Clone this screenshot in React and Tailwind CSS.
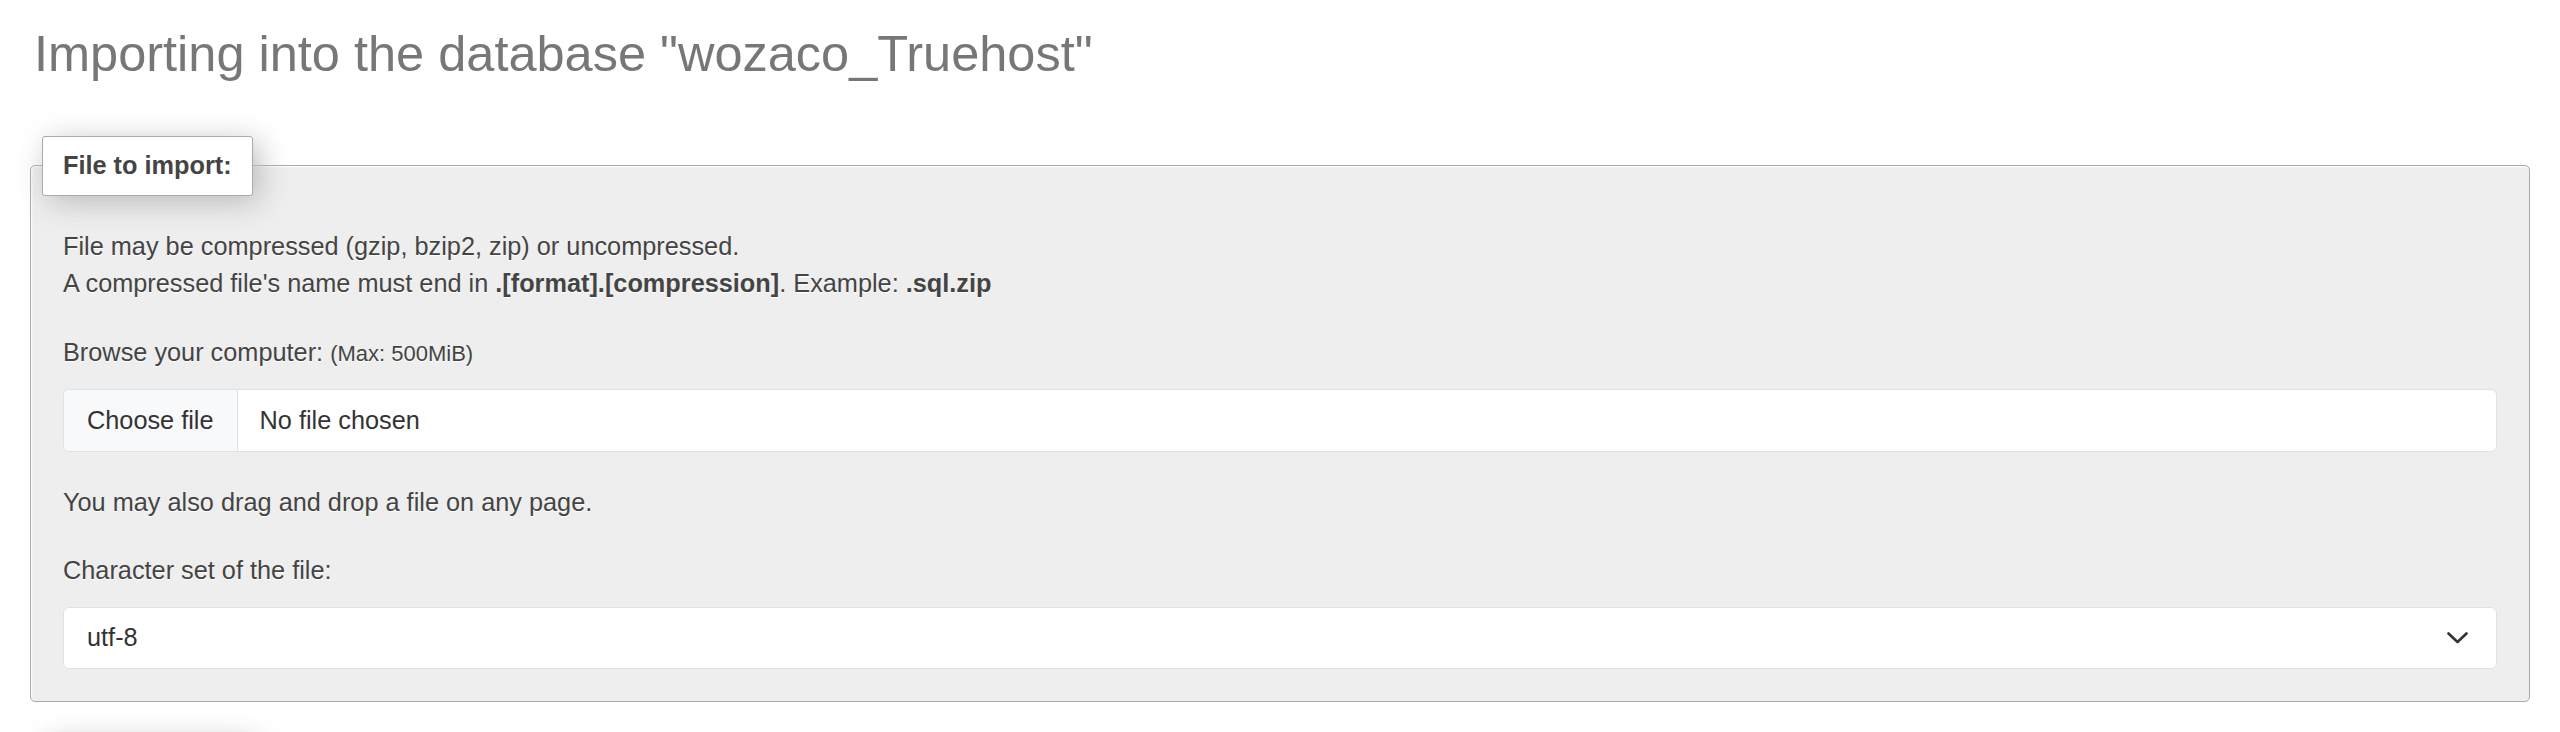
// Import page – phpMyAdmin style

const ChevronDown = () => (
    <svg width="21" height="12" viewBox="0 0 21 12" fill="none" aria-hidden="true">
        <polyline points="1.5,1.5 10.5,10 19.5,1.5" stroke="#333" strokeWidth="2.6" strokeLinecap="round" strokeLinejoin="round" />
    </svg>
);

const App = () => {
    return (
        <main className="h-[732px] overflow-hidden bg-white px-[30px] font-['Liberation_Sans',Arial,sans-serif] text-[25.3px] leading-[37.5px] text-[#444]">

            {/* page title */}
            <h2 className="pt-[23px] pl-[4px] text-[50.5px] leading-[61px] font-normal text-[#777]">
                Importing into the database "wozaco_Truehost"
            </h2>

            {/* file to import */}
            <fieldset className="mt-[52px] rounded-[5px] border border-[#aaa] bg-[#eee] px-[11px] pb-[32px] shadow-[inset_1px_1px_2px_#fff] [text-shadow:0_1px_0_#fff]">
                <legend className="rounded-[3px] border border-[#aaa] bg-white px-[20px] py-[10px] font-bold shadow-[6px_6px_30px_#bbb]">
                    File to import:
                </legend>

                <div className="px-[21px] pt-[32px]">
                    <p>
                        File may be compressed (gzip, bzip2, zip) or uncompressed.
                        <br />
                        A compressed file's name must end in <b>.[format].[compression]</b>. Example: <b>.sql.zip</b>
                    </p>

                    <div className="mt-[31px]">
                        Browse your computer: <span className="text-[22px]">(Max: 500MiB)</span>
                    </div>

                    <div className="mt-[17px] flex h-[63px] overflow-hidden rounded-[6px] border border-[#dee2e6] bg-white text-[#333] [text-shadow:none]">
                        <div className="flex items-center border-r border-[#dee2e6] bg-[#f8f9fa] px-[23px]">Choose file</div>
                        <div className="flex items-center pl-[22px]">No file chosen</div>
                    </div>

                    <p className="mt-[32px]">You may also drag and drop a file on any page.</p>

                    <div className="mt-[30px]">Character set of the file:</div>

                    <div className="mt-[18px] flex h-[62px] items-center justify-between rounded-[6px] border border-[#dee2e6] bg-white pl-[23px] pr-[28px] text-[#333] [text-shadow:none]">
                        <span>utf-8</span>
                        <ChevronDown />
                    </div>
                </div>
            </fieldset>

            {/* next section, only its legend shadow peeks in */}
            <fieldset className="mt-[35px] rounded-[5px] border border-[#aaa] bg-[#eee] px-[11px] pb-[32px]">
                <legend className="h-[59px] w-[209px] rounded-[3px] border border-[#aaa] bg-white shadow-[6px_6px_30px_#bbb]" />
                <div className="h-[120px]" />
            </fieldset>
        </main>
    );
};

export default App;
